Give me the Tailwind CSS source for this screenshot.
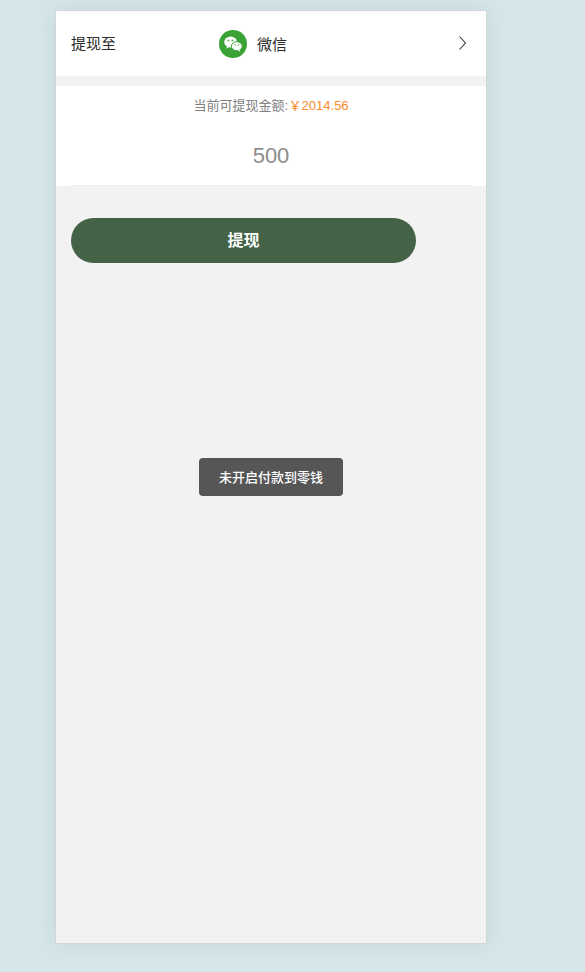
<!DOCTYPE html>
<html lang="zh-CN">

<head>
    <meta charset="UTF-8" />
    <title>提现</title>
    <script src="https://cdn.jsdelivr.net/npm/@tailwindcss/browser@4"></script>
</head>

<body class="bg-[#d5e7ea] h-[972px] overflow-hidden font-['Liberation_Sans','Noto_Sans_CJK_SC',sans-serif]">
    <div class="relative ml-[55px] mt-[10px] w-[432px] h-[934px] border border-[#d3d6d6] bg-[#f2f2f2] shadow-[0_0_20px_rgba(120,130,130,0.16)]">
        <!-- withdraw target -->
        <div class="flex items-center h-[65px] bg-white pl-[15px] pr-[20px]">
            <span class="w-[148px] text-[15px] text-[#2b2b2b] mt-[1px]">提现至</span>
            <svg class="w-[28px] h-[28px]" viewBox="0 0 28 28">
                <circle cx="14" cy="14" r="14" fill="#3ba336" />
                <ellipse cx="11.6" cy="12" rx="6.4" ry="5.4" fill="#fff" />
                <path d="M8 16l-.6 2.6 3-1.6z" fill="#fff" />
                <ellipse cx="17.8" cy="16.2" rx="5.4" ry="4.5" fill="#fff" stroke="#3ba336" stroke-width="1" />
                <path d="M20.6 19.6l.6 2-2.4-1.2z" fill="#fff" />
                <circle cx="9.4" cy="10.4" r=".9" fill="#3ba336" />
                <circle cx="13.4" cy="10.4" r=".9" fill="#3ba336" />
                <circle cx="16" cy="15" r=".7" fill="#3ba336" />
                <circle cx="19.4" cy="15" r=".7" fill="#3ba336" />
            </svg>
            <span class="ml-[10px] mt-[4px] text-[15px] text-[#2b2b2b]">微信</span>
            <svg class="ml-auto -mt-[1px] w-[7px] h-[14px]" viewBox="0 0 7 14" fill="none">
                <path d="M.5 .5l6 6.5-6 6.5" stroke="#333" stroke-width="1.1" />
            </svg>
        </div>

        <!-- amount -->
        <div class="mt-[10px] h-[100px] bg-white px-[15px]">
            <div class="pt-[10px] h-[38px] text-center text-[13px] leading-[19px] text-[#808080]">当前可提现金额: <span class="-ml-[3px] text-[#fa8a2c]">￥2014.56</span></div>
            <div class="h-[62px] border-b border-[#eeeeee] text-center text-[22px] leading-[64px] text-[#8c8c8c]">500</div>
        </div>

        <button class="block mt-[32px] ml-[15px] w-[345px] h-[45px] rounded-full bg-[#436246] text-white text-[16px] font-bold">提现</button>

        <!-- toast -->
        <div class="absolute left-[143px] top-[447px] w-[144px] h-[38px] rounded-[4px] bg-[#565656] text-white text-[13px] font-medium leading-[39px] text-center">未开启付款到零钱</div>
    </div>
</body>

</html>
